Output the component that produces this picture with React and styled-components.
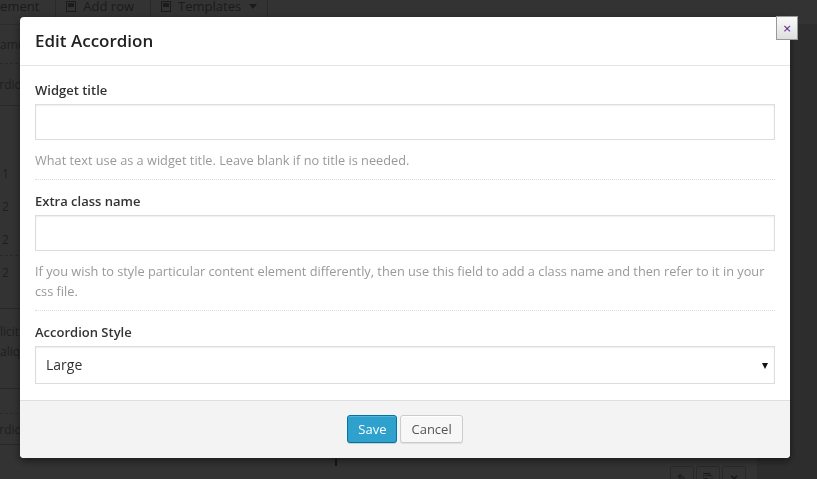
import React from "react"
import styled, { createGlobalStyle } from "styled-components"

const GlobalStyle = createGlobalStyle`
  html, body { margin: 0; padding: 0; height: 100%; overflow: hidden; }
  body {
    font-family: "Open Sans", "Liberation Sans", sans-serif;
    background: #e2e2e2;
  }
  * { box-sizing: border-box; }
`

/* ---- page behind the modal ---- */

const Page = styled.div`
  height: 479px;
  overflow: hidden;
  display: flex;
  flex-direction: column;
  background: #e2e2e2;
  color: #999;
  font-size: 12px;
`
const Toolbar = styled.div`
  flex: none;
  margin-top: -12px;
  height: 37px;
  display: flex;
  background: #fff;
  border-bottom: 1px solid #ddd;
`
const ToolButton = styled.div`
  display: flex;
  align-items: center;
  gap: 7px;
  padding: 0 ${p => (p.$caret ? 10 : 16)}px 0 10px;
  border-right: 1px solid #ccc;
  font-size: 13px;
  color: #888;
  white-space: nowrap;
  &:first-child { margin-left: -65px; }
`
const Caret = styled.span`
  width: 0;
  height: 0;
  margin-left: 1px;
  border-left: 4px solid transparent;
  border-right: 4px solid transparent;
  border-top: 5px solid #888;
`
const Main = styled.div`
  flex: 1;
  display: flex;
`
const Panel = styled.div`
  width: 757px;
  background: #fff;
  display: flex;
  flex-direction: column;
`
const Row = styled.div`
  flex: none;
  height: ${p => p.$h}px;
  display: flex;
  align-items: center;
  padding-left: ${p => p.$pad || 0}px;
  text-indent: ${p => p.$indent || 0}px;
  border-bottom: ${p => (p.$line ? `1px ${p.$line} #ccc` : "none")};
  background: ${p => p.$bg || "transparent"};
  font-size: 12px;
  color: #999;
  white-space: nowrap;
`
const Para = styled.div`
  flex: none;
  height: 80px;
  padding-top: 13px;
  line-height: 20px;
  font-size: 12px;
  text-indent: ${p => p.$indent}px;
  border-bottom: 1px solid #ccc;
`
const Footer = styled.div`
  flex: 1;
  display: flex;
  align-items: flex-start;
  padding-top: 14px;
  padding-right: 11px;
`
const Mark = styled.span`
  width: 2px;
  height: 7px;
  margin-left: 335px;
  background: #777;
`
const IconGroup = styled.div`
  margin-left: auto;
  margin-top: 7px;
  display: flex;
  gap: 2px;
`
const IconBox = styled.div`
  width: 24px;
  height: 24px;
  border: 1px solid #ccc;
  border-radius: 2px;
  display: flex;
  align-items: center;
  justify-content: center;
  color: #666;
`

/* ---- overlay + modal ---- */

const Overlay = styled.div`
  position: fixed;
  inset: 0;
  background: rgba(0, 0, 0, 0.8);
`
const Modal = styled.div`
  position: fixed;
  top: 17px;
  left: 20px;
  width: 770px;
  background: #fff;
  border-radius: 4px;
  box-shadow: 0 3px 8px rgba(0, 0, 0, 0.5);
  display: flex;
  flex-direction: column;
`
const Header = styled.div`
  height: 49px;
  display: flex;
  align-items: center;
  padding: 0 15px 1px;
  border-bottom: 1px solid #e5e5e5;
`
const Title = styled.h1`
  margin: 0;
  font-size: 17px;
  font-weight: 600;
  color: #222;
`
const Close = styled.a`
  position: absolute;
  top: -1px;
  right: -8px;
  width: 22px;
  height: 24px;
  display: flex;
  align-items: center;
  justify-content: center;
  border: 1px solid #999;
  background: linear-gradient(#fafafa, #dedede);
  color: #551a8b;
  font-family: "DejaVu Sans", sans-serif;
  font-size: 11px;
  line-height: 1;
  text-decoration: none;
  cursor: pointer;
`
const Body = styled.div`
  padding: 0 15px;
`
const Section = styled.div`
  padding: ${p => (p.$first ? 14 : 11)}px 0 ${p => (p.$last ? 16 : 9)}px;
  border-bottom: ${p => (p.$last ? "none" : "1px dotted #dcdcdc")};
`
const Label = styled.div`
  font-size: 13px;
  line-height: 20px;
  font-weight: 600;
  color: #333;
`
const Input = styled.input`
  display: block;
  width: 100%;
  height: 36px;
  margin-top: 4px;
  padding: 0 10px;
  border: 1px solid #ddd;
  box-shadow: inset 0 1px 2px rgba(0, 0, 0, 0.07);
  font-family: inherit;
  font-size: 14px;
  color: #333;
  outline: none;
`
const Help = styled.p`
  margin: 10px 0 0;
  font-size: 12.75px;
  line-height: 20px;
  color: #999;
`
const SelectWrap = styled.div`
  position: relative;
  margin-top: 4px;
  &::after {
    content: "";
    position: absolute;
    right: 7px;
    top: 17px;
    border-left: 3.5px solid transparent;
    border-right: 3.5px solid transparent;
    border-top: 6px solid #111;
    pointer-events: none;
  }
`
const Select = styled.select`
  display: block;
  width: 100%;
  height: 38px;
  padding: 0 10px 1px 10px;
  appearance: none;
  border: 1px solid #ddd;
  border-radius: 0;
  background: #fff;
  box-shadow: inset 0 1px 2px rgba(0, 0, 0, 0.07);
  font-family: inherit;
  font-size: 14px;
  color: #333;
  outline: none;
`
const ModalFooter = styled.div`
  display: flex;
  justify-content: center;
  gap: 3px;
  padding: 14px 0 15px;
  background: #f3f3f3;
  border-top: 1px solid #dedede;
  border-radius: 0 0 4px 4px;
`
const Button = styled.button`
  height: 28px;
  padding: 0 10px 1px;
  border-radius: 3px;
  border: 1px solid ${p => (p.$primary ? "#0074a2" : "#ccc")};
  background: ${p => (p.$primary ? "#2ea2cc" : "#f7f7f7")};
  box-shadow: ${p =>
    p.$primary
      ? "inset 0 1px 0 rgba(120, 200, 230, 0.5), 0 1px 0 rgba(0, 0, 0, 0.15)"
      : "inset 0 1px 0 #fff, 0 1px 0 rgba(0, 0, 0, 0.08)"};
  color: ${p => (p.$primary ? "#fff" : "#555")};
  font-family: inherit;
  font-size: 13px;
  cursor: pointer;
`

const DocIcon = () => (
  <svg width="10" height="11" viewBox="0 0 10 11">
    <rect x="0.5" y="0.5" width="9" height="10" fill="none" stroke="#888" />
    <rect x="2" y="2" width="6" height="4" fill="#888" />
  </svg>
)

const App = () => {
  return (
    <>
      <GlobalStyle />
      <Page>
        <Toolbar>
          <ToolButton><DocIcon />Add element</ToolButton>
          <ToolButton><DocIcon />Add row</ToolButton>
          <ToolButton $caret><DocIcon />Templates<Caret /></ToolButton>
        </Toolbar>
        <Main>
          <Panel>
            <Row $h={39} $indent={-9} $line="dashed">Name</Row>
            <Row $h={42} $indent={-27} $line="solid" $bg="#fbfbfb">Accordion</Row>
            <Row $h={51} />
            <Row $h={33} $pad={2}>1</Row>
            <Row $h={33} $pad={2}>2</Row>
            <Row $h={33} $pad={2} $line="dashed">2</Row>
            <Row $h={33} $pad={2}>2</Row>
            <Row $h={20} $line="solid" />
            <Para $indent={-16}>sollicitudin<br />aliquam</Para>
            <Row $h={25} $line="dashed" />
            <Row $h={31} $indent={-27} $line="solid">Accordion</Row>
            <Footer>
              <Mark />
              <IconGroup>
                <IconBox>✎</IconBox>
                <IconBox>⎘</IconBox>
                <IconBox>✕</IconBox>
              </IconGroup>
            </Footer>
          </Panel>
        </Main>
      </Page>

      <Overlay />
      <Modal>
        <Close>×</Close>
        <Header>
          <Title>Edit Accordion</Title>
        </Header>
        <Body>
          <Section $first>
            <Label>Widget title</Label>
            <Input type="text" />
            <Help>What text use as a widget title. Leave blank if no title is needed.</Help>
          </Section>
          <Section>
            <Label>Extra class name</Label>
            <Input type="text" />
            <Help>
              If you wish to style particular content element differently, then use this field
              to add a class name and then refer to it in your css file.
            </Help>
          </Section>
          <Section $last>
            <Label>Accordion Style</Label>
            <SelectWrap>
              <Select defaultValue="large">
                <option value="large">Large</option>
                <option value="small">Small</option>
              </Select>
            </SelectWrap>
          </Section>
        </Body>
        <ModalFooter>
          <Button $primary>Save</Button>
          <Button>Cancel</Button>
        </ModalFooter>
      </Modal>
    </>
  )
}

export default App
